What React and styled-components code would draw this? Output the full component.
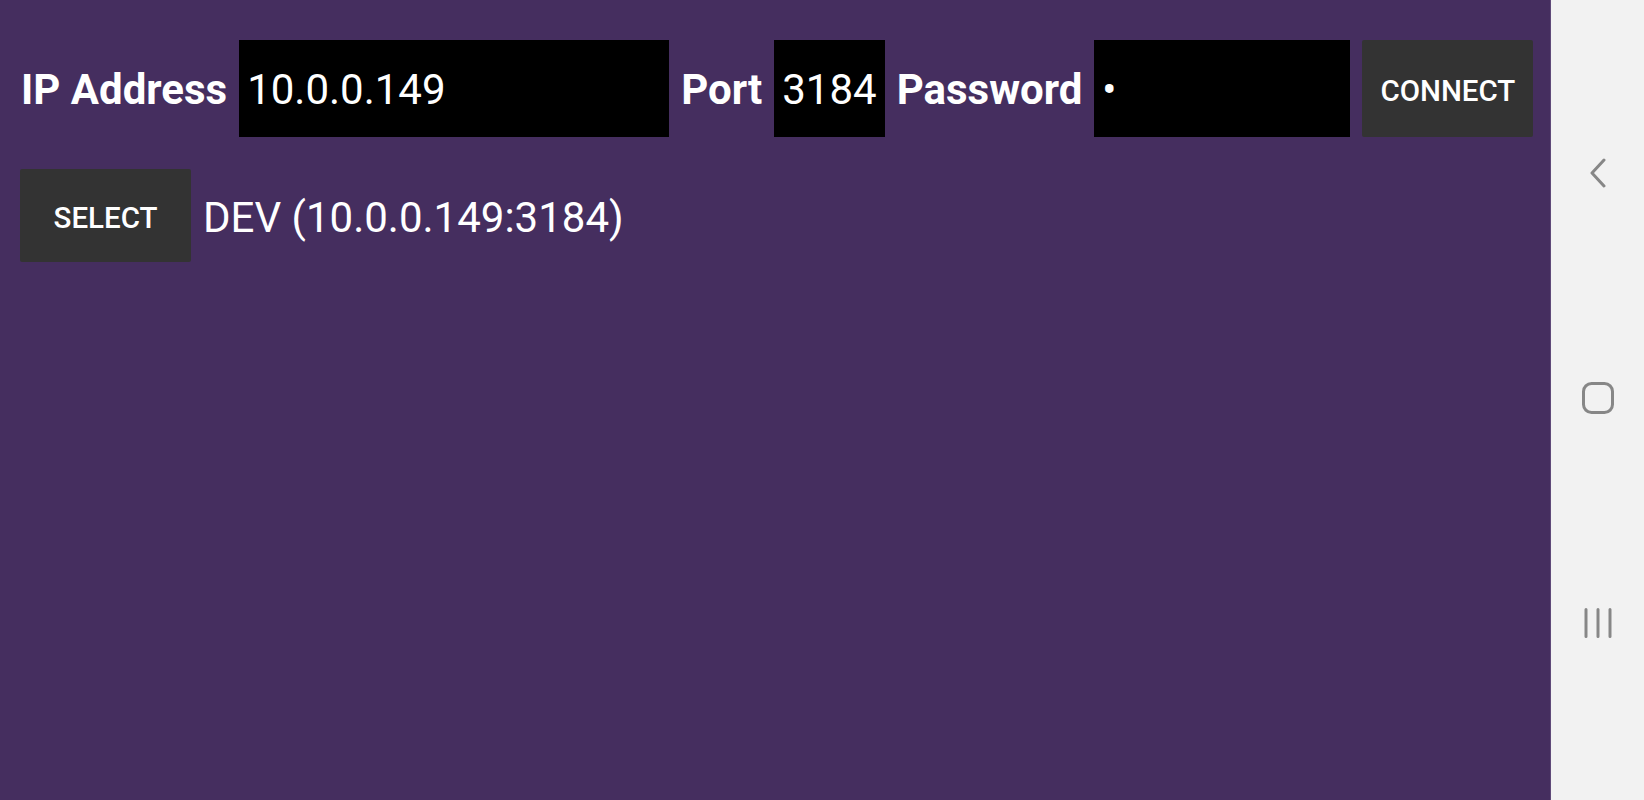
import React from 'react';
import styled, { createGlobalStyle } from 'styled-components';

const GlobalStyle = createGlobalStyle`
  html, body {
    margin: 0;
    padding: 0;
    height: 100%;
  }
  body {
    font-family: Roboto, "Liberation Sans", sans-serif;
  }
  #root {
    height: 100%;
  }
`;

function App() {
  return (
    <>
      <GlobalStyle />
      <Screen>
        <Main>
          <FormRow>
            <Label>IP Address</Label>
            <Field grow>10.0.0.149</Field>
            <Label>Port</Label>
            <Field>3184</Field>
            <Label>Password</Label>
            <Field width="256px">•</Field>
            <Button>CONNECT</Button>
          </FormRow>
          <ServerRow>
            <Button>SELECT</Button>
            <ServerName>DEV (10.0.0.149:3184)</ServerName>
          </ServerRow>
        </Main>
        <NavBar>
          <NavIcon width="18" height="30" viewBox="0 0 18 30">
            <path d="M15 2 L3 15 L15 28" />
          </NavIcon>
          <NavIcon width="32" height="32" viewBox="0 0 32 32">
            <rect x="1.5" y="1.5" width="29" height="29" rx="8" />
          </NavIcon>
          <NavIcon width="30" height="30" viewBox="0 0 30 30">
            <path d="M3 1.5 V28.5 M15 1.5 V28.5 M27 1.5 V28.5" />
          </NavIcon>
        </NavBar>
      </Screen>
    </>
  );
}

/* STYLED COMPONENTS */
const Screen = styled.div`
  display: flex;
  height: 800px;
  width: 100%;
`

const Main = styled.div`
  flex: 1;
  background-color: #452e5f;
  border-right: 1px solid #5f4a79;
  padding: 40px 0 0 20px;
  display: flex;
  flex-direction: column;
  gap: 32px;
`

const FormRow = styled.div`
  display: flex;
  align-items: center;
  height: 97px;
  gap: 12px;
  padding-left: 1px;
`

const ServerRow = styled.div`
  display: flex;
  align-items: center;
  height: 93px;
  gap: 12px;
`

const Label = styled.span`
  color: #fff;
  font-size: 42px;
  font-weight: 700;
  white-space: nowrap;
  padding-top: 2px;
`

const Field = styled.div`
  box-sizing: border-box;
  background-color: #000;
  color: #fff;
  height: 97px;
  width: ${p => p.grow ? '430px' : (p.width || 'auto')};
  padding: 2px 8px 0;
  display: flex;
  align-items: center;
  font-size: 42px;
  font-weight: 400;
  white-space: nowrap;
`

const Button = styled.button`
  box-sizing: border-box;
  height: 100%;
  width: 171px;
  border: none;
  border-radius: 2px;
  background-color: #333333;
  color: #fff;
  font-family: Roboto, "Liberation Sans", sans-serif;
  font-size: 29.5px;
  font-weight: 500;
  padding: 4px 0 0;
`

const ServerName = styled.span`
  color: #fff;
  font-size: 42px;
  font-weight: 400;
  padding-top: 4px;
`

const NavBar = styled.div`
  width: 93px;
  background-color: #f2f2f2;
  display: flex;
  flex-direction: column;
  align-items: center;
  justify-content: space-between;
  padding: 158px 0 162px;
  box-sizing: border-box;
`

const NavIcon = styled.svg`
  fill: none;
  stroke: #878787;
  stroke-width: 3;
  stroke-linecap: round;
  stroke-linejoin: round;
`

export default App;
